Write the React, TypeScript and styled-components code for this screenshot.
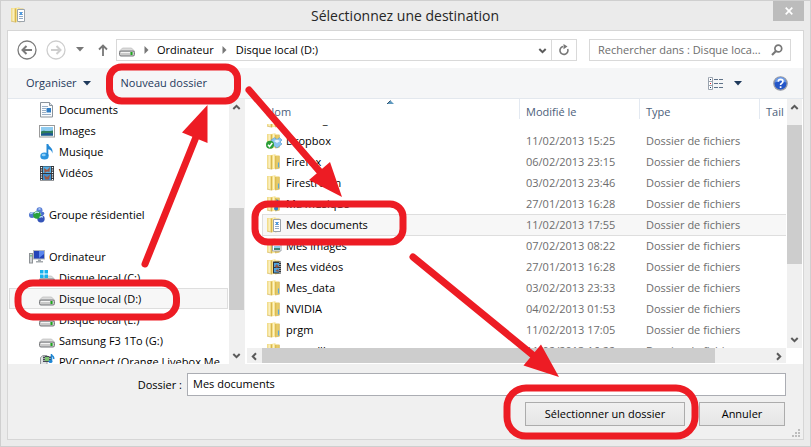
import React from "react";
import styled, { createGlobalStyle, css } from "styled-components";

const GlobalStyle = createGlobalStyle`
  * { box-sizing: border-box; }
  body { margin: 0; background: #ebebeb; }
  body, button, input, table {
    font-family: "Open Sans", "Noto Sans", sans-serif;
    font-size: 11px;
    line-height: 20px;
    color: #000;
  }
  button { border: 0; padding: 0; background: none; }
  svg { display: block; flex: none; }
`;

/* ---------- layout ---------- */

const Window = styled.main`
  position: relative;
  display: flex;
  flex-direction: column;
  height: 100vh;
  overflow: hidden;
  padding: 0 6px 6px;
  background: #ebebeb;
  border: 1px solid #cfcfcf;
`;
const TitleBar = styled.header`
  display: grid;
  grid-template-columns: 32px 1fr 34px;
  flex: none;
  height: 29px;
  padding-left: 1px;
`;
const Title = styled.h1`
  margin: 0;
  font-size: 14px;
  font-weight: 400;
  line-height: 29px;
  text-align: center;
  color: #262626;
`;
const CloseButton = styled.button`
  display: grid;
  place-items: center;
  justify-self: end;
  width: 31px;
  height: 20px;
  background: #bcbcbc;
`;
const TitleIcon = styled.span`
  padding: 6px 0 0 2px;
`;
const Client = styled.div`
  display: flex;
  flex-direction: column;
  flex: 1;
  min-height: 0;
  border: 1px solid #d6d6d6;
  background: #f0f0f0;
`;
const AddressRow = styled.div`
  display: flex;
  align-items: center;
  flex: none;
  height: 37px;
  padding: 0 12px 0 9px;
  background: #fff;
`;
const NavButton = styled.button<{ $w: number }>`
  display: grid;
  place-items: center;
  flex: none;
  width: ${(p) => p.$w}px;
  height: 22px;
`;
const UpButton = styled(NavButton)`
  padding-left: 4px;
`;
const AddressBox = styled.div`
  display: flex;
  align-items: center;
  flex: 1;
  height: 22px;
  margin-right: 12px;
  padding-left: 2px;
  border: 1px solid #d9d9d9;
`;
const Crumb = styled.button`
  white-space: nowrap;
`;
const CrumbArrow = styled.span`
  display: grid;
  place-items: center;
  width: 22px;
`;
const AddressEnd = styled.div`
  display: flex;
  height: 20px;
  margin-left: auto;
`;
const RefreshButton = styled.button`
  display: grid;
  place-items: center;
  width: 25px;
  border-left: 1px solid #d9d9d9;
`;
const SearchBox = styled.label`
  display: flex;
  align-items: center;
  width: 202px;
  height: 22px;
  padding: 0 7px 0 8px;
  border: 1px solid #d9d9d9;
`;
const SearchInput = styled.input`
  flex: 1;
  min-width: 0;
  height: 20px;
  padding: 0;
  border: 0;
  outline: 0;
  &::placeholder { color: #6d6d6d; opacity: 1; }
`;
const ToolBar = styled.div`
  display: flex;
  align-items: center;
  flex: none;
  height: 31px;
  padding: 0 15px 0 18px;
  background: #f5f6f7;
  border-bottom: 1px solid #e3e8ee;
`;
const ToolButton = styled.button<{ $gap?: number }>`
  display: flex;
  align-items: center;
  gap: 6px;
  margin-right: ${(p) => p.$gap ?? 0}px;
  color: #1e395b;
`;
const ToolEnd = styled.div`
  display: flex;
  align-items: center;
  margin-left: auto;
`;
const Body = styled.div`
  display: flex;
  flex: 1;
  min-height: 0;
  padding: 0 1px;
  background: #fff;
`;

/* ---------- navigation pane ---------- */

const NavPane = styled.nav`
  flex: none;
  display: flex;
  width: 236px;
  border-right: 1px solid #f0f0f0;
`;
const Tree = styled.div`
  flex: 1;
  min-width: 0;
  overflow: hidden;
`;
const TreeGroup = styled.section`
  margin-bottom: 21px;
`;
const TreeItem = styled.a<{ $root?: boolean; $selected?: boolean }>`
  display: flex;
  align-items: center;
  gap: 4px;
  height: 21px;
  margin-right: 1px;
  padding-left: ${(p) => (p.$root ? 19 : 29)}px;
  border: 1px solid transparent;
  color: #000;
  text-decoration: none;
  white-space: nowrap;
  overflow: hidden;
  ${(p) =>
    p.$selected &&
    css`
      background: #f7f7f7;
      border-color: #dedede;
    `}
`;

/* ---------- scroll bars ---------- */

const VBar = styled.div`
  display: flex;
  flex-direction: column;
  flex: none;
  width: 15px;
  background: #f0f0f0;
`;
const HBar = styled.div`
  display: flex;
  flex: none;
  height: 15px;
  background: #f0f0f0;
`;
const BarButton = styled.button`
  display: grid;
  place-items: center;
  flex: none;
  width: 15px;
  height: 17px;
`;
const Space = styled.span<{ $grow: number }>`
  flex: ${(p) => p.$grow} 1 0;
`;
const Thumb = styled(Space)`
  background: #cdcdcd;
`;

/* ---------- file list ---------- */

const ListPane = styled.section`
  display: flex;
  flex: 1;
  flex-direction: column;
  min-width: 0;
  padding-left: 2px;
`;
const ListArea = styled.div`
  display: flex;
  flex: 1;
  min-height: 0;
`;
const HArea = styled.div`
  padding: 0 16px 1px 0;
`;
const Table = styled.table`
  display: flex;
  flex: 1;
  flex-direction: column;
  min-width: 0;
  overflow: hidden;
`;
const columns = css`
  display: grid;
  grid-template-columns: 1fr 120px 120px 27px;
  margin: 0 1px 0 15px;
`;
const Head = styled.thead`
  flex: none;
  display: block;
`;
const HeadRow = styled.tr`
  ${columns}
  height: 25px;
`;
const Th = styled.th<{ $first?: boolean }>`
  position: relative;
  height: 20px;
  padding: 3px 0 0 ${(p) => (p.$first ? 4 : 6)}px;
  border-left: ${(p) => (p.$first ? "0" : "1px solid #e3e9f1")};
  font-weight: 400;
  text-align: left;
  color: #4c607a;
`;
const SortMark = styled.span`
  position: absolute;
  top: 1px;
  left: calc(50% - 4px);
`;
const TBody = styled.tbody`
  display: block;
  flex: 1;
  min-height: 0;
  overflow: hidden;
  & > tr:first-child { margin-top: -15px; }
`;
const Tr = styled.tr<{ $selected?: boolean }>`
  ${columns}
  height: 21px;
  ${(p) =>
    p.$selected &&
    css`
      background: #f7f7f7;
      box-shadow: inset 0 1px #dedede, inset 1px 0 #dedede, 0 1px #dedede;
    `}
`;
const Td = styled.td<{ $name?: boolean }>`
  display: flex;
  align-items: center;
  gap: 4px;
  padding: 0 0 0 ${(p) => (p.$name ? 4 : 7)}px;
  color: ${(p) => (p.$name ? "#000" : "#6d6d6d")};
  white-space: nowrap;
`;

/* ---------- footer ---------- */

const Footer = styled.form`
  flex: none;
  height: 75px;
  padding: 9px 0 0 1px;
`;
const Field = styled.label`
  display: grid;
  grid-template-columns: 173px 1fr;
  gap: 5px;
  align-items: center;
  padding-right: 17px;
  text-align: right;
`;
const TextInput = styled.input`
  width: 100%;
  height: 23px;
  padding: 0 5px 2px;
  border: 1px solid #abadb3;
  background: #fff;
  outline: 0;
`;
const Actions = styled.div`
  display: flex;
  justify-content: flex-end;
  gap: 14px;
  margin-top: 6px;
  padding-right: 18px;
`;
const PushButton = styled.button<{ $w: number }>`
  width: ${(p) => p.$w}px;
  height: 24px;
  border: 1px solid #acacac;
  background: linear-gradient(#f0f0f0, #e5e5e5);
`;
const Grip = styled.div`
  display: flex;
  justify-content: flex-end;
  margin-top: 3px;
  padding-right: 3px;
`;
const Annotations = styled.svg`
  position: absolute;
  top: -1px;
  left: -1px;
  pointer-events: none;
`;

/* ---------- icons ---------- */

const Caret = ({ color = "#1e395b" }: { color?: string }) => (
  <svg width="8" height="5" viewBox="0 0 8 5"><path d="M0 0h8L4 4.5z" fill={color} /></svg>
);
const RightCaret = () => (
  <svg width="5" height="8" viewBox="0 0 5 8"><path d="M.5 0 4.5 4 .5 8z" fill="#777" /></svg>
);
const rotations = { up: 0, right: 90, down: 180, left: 270 };
const Chevron = ({ dir }: { dir: keyof typeof rotations }) => (
  <svg width="9" height="9" viewBox="0 0 9 9">
    <path d="M1.3 6 4.5 2.8 7.7 6" fill="none" stroke="#5a5a5a" strokeWidth="2" transform={`rotate(${rotations[dir]} 4.5 4.5)`} />
  </svg>
);
const RoundArrow = ({ color, forward }: { color: string; forward?: boolean }) => (
  <svg width="20" height="20" viewBox="0 0 20 20" fill="none" stroke={color}>
    <circle cx="10" cy="10" r="9" strokeWidth="1.3" />
    <path d={forward ? "M5 10h9M10.500 6l4 4-4 4" : "M15 10H6M9.500 6l-4 4 4 4"} strokeWidth="2" />
  </svg>
);
const Drive = ({ system }: { system?: boolean }) => (
  <svg width="16" height="16" viewBox="0 0 16 16">
    <path d="M3.500 6h9L15.500 9v1H.5V9z" fill="#dcdcdc" stroke="#b4b4b4" strokeWidth=".6" />
    <rect x=".5" y="9" width="15" height="5" rx="1.500" fill="#c9c9c9" stroke="#77797c" />
    <path d="M2 10.500h9" stroke="#f3f3f3" />
    <rect x="11.500" y="10" width="2" height="3" fill="#1ca81c" />
    {system && <path d="M1 0h3.500v3.500H1zM5.500 0H9v3.500H5.500zM1 4.500h3.500V8H1zM5.500 4.500H9V8H5.500z" fill="#16b3ef" />}
  </svg>
);
const DocIcon = () => (
  <svg width="16" height="16" viewBox="0 0 16 16">
    <path d="M1.500.5h9l3 3v11.500h-12z" fill="#fbfcfd" stroke="#8a939b" />
    <path d="M10.500.5v3h3" fill="#dde4ea" stroke="#8a939b" />
    <path d="M3 4.500h6M3 6.500h4M3 8.500h4M3 10.500h4M3 12.500h9" stroke="#9bb0c6" />
    <rect x="7.500" y="6" width="4.500" height="4.500" fill="#2e7cc4" />
  </svg>
);
const ImageIcon = () => (
  <svg width="16" height="16" viewBox="0 0 16 16">
    <rect x=".5" y="2.500" width="15" height="11.500" fill="#fff" stroke="#9a9a9a" />
    <rect x="2" y="4" width="12" height="8.500" fill="#8ecbf0" />
    <path d="M2 8.500c3-2 4 .5 12-1v5H2z" fill="#2f7d5c" />
    <path d="M2 11c4-1 8-1.500 12-.5v2H2z" fill="#1f5796" />
  </svg>
);
const MusicIcon = () => (
  <svg width="16" height="16" viewBox="0 0 16 16">
    <ellipse cx="5.500" cy="12" rx="4.200" ry="3.500" fill="#2a94df" />
    <path d="M7.500 0h1.800c.3 3 5.500 3.500 4 9.500-.3-2.500-1.800-4-4-4.200V12H7.500z" fill="#2489d6" />
    <ellipse cx="4.700" cy="11" rx="2" ry="1.300" fill="#8fd0f8" />
  </svg>
);
const VideoIcon = () => (
  <svg width="16" height="16" viewBox="0 0 16 16">
    <rect x="1" y="1" width="14" height="14.500" fill="#30343a" />
    <rect x="4" y="1.500" width="8" height="6.500" fill="#55aee5" />
    <rect x="4" y="9" width="8" height="6" fill="#3c8fd0" />
    <path d="M5 3l3 2 3-3-.5 5L8 6.500 5.500 8zM5 10l3 2 3-2.500-1 5H6z" fill="#9c5a45" />
    <path d="M2.500 2v13M13.500 2v13" stroke="#fff" strokeWidth="1.300" strokeDasharray="1.200 1.200" />
  </svg>
);
const HomeGroupIcon = () => (
  <svg width="16" height="16" viewBox="0 0 16 16">
    <circle cx="10.500" cy="3.300" r="3" fill="#5b7fd6" />
    <circle cx="3" cy="8" r="3" fill="#4f76cf" />
    <circle cx="12" cy="11.800" r="3.700" fill="#3454b8" />
    <circle cx="13.500" cy="6.500" r="1.800" fill="#4a6fcb" />
    <circle cx="8" cy="8" r="3.800" fill="#28a23a" />
    <path d="M5.500 6.500q2-2.500 4.500-.8M1.500 7q1-1.500 2.500-1M9.500 2.300q1-1 2 0M10.500 10.500q2-1.500 3.500-.2" stroke="#c8e4ff" strokeWidth="1.200" fill="none" />
  </svg>
);
const ComputerIcon = () => (
  <svg width="16" height="16" viewBox="0 0 16 16">
    <rect x=".5" y="4.500" width="3" height="9.500" fill="#d0d3d6" stroke="#8d9195" />
    <rect x="4.500" y="1.500" width="11" height="8.500" fill="#2243b8" stroke="#b1b6bc" />
    <path d="M10 2h5v3l-5 4z" fill="#5a86ee" />
    <path d="M9 10.500h3V12h2v1.500H7V12h2z" fill="#a4a9ad" />
    <rect x="1.500" y="6" width="1" height="1.500" fill="#28b93a" />
  </svg>
);
const MediaServerIcon = () => (
  <svg width="16" height="16" viewBox="0 0 16 16">
    <path d="M1.500 3.500 4 1.500h4V15H1.500z" fill="#dfe1e3" stroke="#96999d" />
    <rect x="4" y="2" width="8" height="6" fill="#424952" />
    <rect x="6" y="3" width="4" height="4" fill="#7cc36f" />
    <path d="M5 2v6M11 2v6" stroke="#fff" strokeDasharray="1 1" />
    <path d="M12.500 0v7M12.500 1q3 2 2 4" stroke="#1f86d4" strokeWidth="1.500" fill="none" />
    <ellipse cx="11.500" cy="7.500" rx="2" ry="1.500" fill="#1f86d4" />
  </svg>
);

type FolderKind = "plain" | "dropbox" | "music" | "doc" | "image" | "video";
const FolderIcon = ({ kind = "plain" }: { kind?: FolderKind }) => (
  <svg width="16" height="16" viewBox="0 0 16 16">
    <path d="M1 1h5v14L1 14z" fill="#f2dd8c" />
    <path d="M2.500 1.500H4V14l-1.500-.3z" fill="#faefc0" />
    <path d="M9 1.500h4.500v12.700L9 15z" fill="#e8cc68" />
    <path d="M5.500 1 9.500.3V14.500l-4 1z" fill="#f5df86" />
    <path d="M7 1.200l1.200-.2v13.300l-1.200.3z" fill="#fcf3c8" />
    <path d="M5.500 1.500v13.500M9.700 2v12.500" stroke="#d4b24a" strokeWidth=".9" />
    <path d="M1 14.200l5 1M9 15l4.500-.8M13.300 2v12" stroke="#cfae52" strokeWidth=".6" />
    {kind === "plain" && <path d="M12.500 8.500V13.500" stroke="#5aa8dd" strokeWidth="1.200" />}
    {kind === "doc" && <g><path d="M7.500 2.500h7v12h-7z" fill="#fff" stroke="#9ba3ab" /><path d="M9 5.500h4M9 7.500h4M9 9.500h4M9 11.500h4" stroke="#8fa9c6" /><path d="M10 5h2v3h-2z" fill="#4f9be0" /></g>}
    {kind === "image" && <g><path d="M6.500 6h8.500v7H6.500z" fill="#fff" stroke="#9ba3ab" /><path d="M8 8h6v2H8z" fill="#8ecbf0" /><path d="M8 10h6v2H8z" fill="#3b8274" /></g>}
    {kind === "music" && <path d="M12 7v5a2 2 0 1 1-1.500-1.500V3q4 2 3 6z" fill="#247fce" />}
    {kind === "video" && <g><path d="M7 2.500h8v12H7z" fill="#30343a" /><path d="M8 4h5v4H8zM8 9h5v4.500H8z" fill="#4fa5df" /><path d="M9 7l2-2 2 3-3 1zM9 12l3-2 1 3z" fill="#8f5848" /><path d="M14 3v11" stroke="#fff" strokeDasharray="1 1" /></g>}
    {kind === "dropbox" && <g><path d="M5 7l3.500-2.300L11 6.500l2.500-1.800L16 7l-2 2 2 2-5 4-4-3z" fill="#8cc4ee" stroke="#4d96cf" strokeWidth=".6" /><path d="M8 8l3-1.500L14 8l-3 2z" fill="#e5f3fd" /><circle cx="4" cy="11.800" r="4" fill="#2b9e37" /><path d="M2 11.800l1.500 1.700L6.300 10" stroke="#fff" strokeWidth="1.500" fill="none" /></g>}
  </svg>
);

/* ---------- data ---------- */

const libraries = [
  { label: "Documents", icon: <DocIcon /> },
  { label: "Images", icon: <ImageIcon /> },
  { label: "Musique", icon: <MusicIcon /> },
  { label: "Vidéos", icon: <VideoIcon /> },
];
const drives = [
  { label: "Disque local (C:)", icon: <Drive system /> },
  { label: "Disque local (D:)", icon: <Drive />, selected: true },
  { label: "Disque local (E:)", icon: <Drive /> },
  { label: "Samsung F3 1To (G:)", icon: <Drive /> },
  { label: "PVConnect (Orange Livebox Me", icon: <MediaServerIcon /> },
];
const files: { name: string; date: string; kind?: FolderKind; selected?: boolean }[] = [
  { name: "Docum_", date: "11/02/2013 15:25" },
  { name: "Dropbox", date: "11/02/2013 15:25", kind: "dropbox" },
  { name: "Firefox", date: "06/02/2013 23:15" },
  { name: "Firestream", date: "03/02/2013 23:46" },
  { name: "Ma musique", date: "27/01/2013 16:28", kind: "music" },
  { name: "Mes documents", date: "11/02/2013 17:55", kind: "doc", selected: true },
  { name: "Mes images", date: "07/02/2013 08:22", kind: "image" },
  { name: "Mes vidéos", date: "27/01/2013 16:28", kind: "video" },
  { name: "Mes_data", date: "03/02/2013 23:33" },
  { name: "NVIDIA", date: "04/02/2013 01:53" },
  { name: "prgm", date: "11/02/2013 17:05" },
  { name: "prgmdll", date: "11/02/2013 16:22" },
];

export default function App() {
  return (
    <Window>
      <GlobalStyle />
      <TitleBar>
        <TitleIcon><FolderIcon kind="doc" /></TitleIcon>
        <Title>Sélectionnez une destination</Title>
        <CloseButton aria-label="Fermer">
          <svg width="8" height="8" viewBox="0 0 8 8"><path d="M.7.7l6.600 6.600M7.300.7.7 7.300" stroke="#fff" strokeWidth="1.700" /></svg>
        </CloseButton>
      </TitleBar>
      <Client>
        <AddressRow>
          <NavButton $w={20} aria-label="Précédent"><RoundArrow color="#7b7b7b" /></NavButton>
          <NavButton $w={38} aria-label="Suivant"><RoundArrow color="#cecece" forward /></NavButton>
          <NavButton $w={10} aria-label="Emplacements récents"><Caret color="#777" /></NavButton>
          <UpButton $w={31} aria-label="Dossier parent">
            <svg width="10" height="12" viewBox="0 0 10 12"><path d="M5 12V2M1 5.500l4-4 4 4" fill="none" stroke="#777" strokeWidth="1.800" /></svg>
          </UpButton>
          <AddressBox>
            <Drive />
            <CrumbArrow><RightCaret /></CrumbArrow>
            <Crumb>Ordinateur</Crumb>
            <CrumbArrow><RightCaret /></CrumbArrow>
            <Crumb>Disque local (D:)</Crumb>
            <AddressEnd>
              <NavButton $w={17} aria-label="Historique"><Chevron dir="down" /></NavButton>
              <RefreshButton aria-label="Actualiser">
                <svg width="12" height="12" viewBox="0 0 12 12"><path d="M5 2.500A4 4 0 1 0 9.700 5" fill="none" stroke="#777" strokeWidth="1.600" /><path d="M5.500 0v5.200L9.500 2.500z" fill="#777" /></svg>
              </RefreshButton>
            </AddressEnd>
          </AddressBox>
          <SearchBox>
            <SearchInput aria-label="Rechercher" placeholder="Rechercher dans : Disque loca..." />
            <svg width="12" height="12" viewBox="0 0 12 12" fill="none" stroke="#777"><circle cx="7.300" cy="4.500" r="3.400" strokeWidth="1.700" /><path d="M5 7 1 11" strokeWidth="2.200" /></svg>
          </SearchBox>
        </AddressRow>
        <ToolBar>
          <ToolButton $gap={30}>Organiser <Caret /></ToolButton>
          <ToolButton>Nouveau dossier</ToolButton>
          <ToolEnd>
            <ToolButton $gap={31} aria-label="Affichage">
              <svg width="20" height="13" viewBox="0 0 20 13">
                <path d="M1.500.5h-1v12h4V.5zM.5 4.500h4M.5 8.500h4" fill="#fff" stroke="#9aa3ae" />
                <path d="M2 2.500h1M2 10.500h1" stroke="#1e395b" /><path d="M2 6.500h1" stroke="#e02020" />
                <path d="M6 2.500h4m1 0h4M6 6.500h4m1 0h4M6 10.500h4m1 0h4" stroke="#5f7288" />
              </svg>
              <Caret />
            </ToolButton>
            <ToolButton aria-label="Aide">
              <svg width="15" height="15" viewBox="0 0 15 15">
                <circle cx="7.500" cy="7.500" r="6.700" fill="#2456c8" stroke="#9a9da5" strokeWidth="1.300" />
                <path d="M2 6.500a5.500 5.500 0 0 1 11 0Q7.500 3.500 2 6.500z" fill="#6b9bea" />
                <path d="M5.300 5.700q0-2.300 2.300-2.300t2.300 2q0 1.300-1.500 2-.8.400-.8 1.600M7.600 10.200v1.700" fill="none" stroke="#fff" strokeWidth="1.700" />
              </svg>
            </ToolButton>
          </ToolEnd>
        </ToolBar>
        <Body>
          <NavPane>
            <Tree>
              <TreeGroup>
                {libraries.map((i) => <TreeItem href="#" key={i.label}>{i.icon}{i.label}</TreeItem>)}
              </TreeGroup>
              <TreeGroup><TreeItem href="#" $root><HomeGroupIcon />Groupe résidentiel</TreeItem></TreeGroup>
              <TreeGroup>
                <TreeItem href="#" $root><ComputerIcon />Ordinateur</TreeItem>
                {drives.map((i) => <TreeItem href="#" key={i.label} $selected={i.selected}>{i.icon}{i.label}</TreeItem>)}
              </TreeGroup>
            </Tree>
            <VBar>
              <BarButton aria-label="Défiler vers le haut"><Chevron dir="up" /></BarButton>
              <Space $grow={92} /><Thumb $grow={102} /><Space $grow={37} />
              <BarButton aria-label="Défiler vers le bas"><Chevron dir="down" /></BarButton>
            </VBar>
          </NavPane>
          <ListPane>
            <ListArea>
              <Table>
                <Head>
                  <HeadRow>
                    <Th $first>Nom<SortMark><svg width="7" height="4" viewBox="0 0 7 4"><path d="M0 4 3.500.5 7 4z" fill="#5f9ac0" /><path d="M0 4 3.500.5" stroke="#34546e" /></svg></SortMark></Th>
                    <Th>Modifié le</Th>
                    <Th>Type</Th>
                    <Th>Tail</Th>
                  </HeadRow>
                </Head>
                <TBody>
                  {files.map((f) => (
                    <Tr key={f.name} $selected={f.selected}>
                      <Td $name><FolderIcon kind={f.kind} />{f.name}</Td>
                      <Td>{f.date}</Td>
                      <Td>Dossier de fichiers</Td>
                      <Td />
                    </Tr>
                  ))}
                </TBody>
              </Table>
              <VBar>
                <BarButton aria-label="Défiler vers le haut"><Chevron dir="up" /></BarButton>
                <Space $grow={9} /><Thumb $grow={138} /><Space $grow={67} />
                <BarButton aria-label="Défiler vers le bas"><Chevron dir="down" /></BarButton>
              </VBar>
            </ListArea>
            <HArea>
              <HBar>
                <BarButton aria-label="Défiler à gauche"><Chevron dir="left" /></BarButton>
                <Thumb $grow={450} /><Space $grow={56} />
                <BarButton aria-label="Défiler à droite"><Chevron dir="right" /></BarButton>
              </HBar>
            </HArea>
          </ListPane>
        </Body>
        <Footer onSubmit={(e) => e.preventDefault()}>
          <Field>Dossier :<TextInput type="text" defaultValue="Mes documents" /></Field>
          <Actions>
            <PushButton type="submit" $w={160}>Sélectionner un dossier</PushButton>
            <PushButton type="button" $w={86}>Annuler</PushButton>
          </Actions>
          <Grip>
            <svg width="8" height="8" viewBox="0 0 8 8"><path d="M6 0h2v2H6zM3 3h2v2H3zM6 3h2v2H6zM0 6h2v2H0zM3 6h2v2H3zM6 6h2v2H6z" fill="#bdbdbd" /></svg>
          </Grip>
        </Footer>
      </Client>
      <Annotations width="811" height="447" viewBox="0 0 811 447" aria-hidden="true">
        <g fill="none" stroke="#ed1c24" strokeWidth="7" strokeLinecap="round">
          <rect x="109.500" y="67" width="128" height="34" rx="12" />
          <rect x="18" y="283" width="158.500" height="34" rx="15" />
          <rect x="255" y="204" width="148" height="38" rx="13" />
          <rect x="507" y="388" width="188" height="48" rx="19" />
          <path d="M145 264 196 137M249 90l72 83M413 257l121 99" />
        </g>
        <path d="M207.500 105 182 132.500 207.500 143zM342 197l-12-35-21 18zM559 377l-18-32.500-17.500 21z" fill="#ed1c24" />
      </Annotations>
    </Window>
  );
}
